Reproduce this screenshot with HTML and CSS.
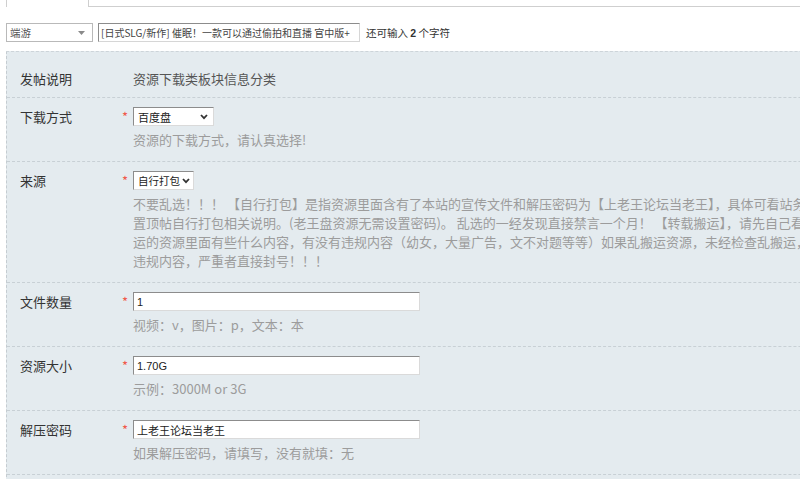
FILE: index.html
```html
<!DOCTYPE html>
<html lang="zh-CN">
<head>
  <meta charset="UTF-8">
  <title>发表帖子</title>
  <link rel="stylesheet" href="styles.css">
</head>
<body>
  <!-- tab strip, the active tab has no bottom border -->
  <div class="tabs">
    <div class="tab"></div>
    <div class="tab-line"></div>
  </div>

  <!-- type + subject -->
  <div class="subject-bar">
    <div class="type-select">
      <span>端游</span>
      <svg class="tri" width="7" height="4" viewBox="0 0 7 4"><path d="M0 0 L7 0 L3.5 4 Z" fill="#8a8a8a"/></svg>
    </div>
    <input class="subject-input" type="text" value="[日式SLG/新作] 催眠！一款可以通过偷拍和直播 官中版+">
    <span class="count-tip">还可输入 <strong>2</strong> 个字符</span>
  </div>

  <div class="panel">
    <div class="row row-intro">
      <div class="label">发帖说明</div>
      <div class="star"></div>
      <div class="field intro-text">资源下载类板块信息分类</div>
    </div>

    <div class="row">
      <div class="label">下载方式</div>
      <div class="star">*</div>
      <div class="field">
        <div class="fake-select select-down">
          <span>百度盘</span>
          <svg width="8" height="6" viewBox="0 0 8 6"><path d="M1 1 L4 4.2 L7 1" fill="none" stroke="#333" stroke-width="1.8"/></svg>
        </div>
        <div class="help">资源的下载方式，请认真选择!</div>
      </div>
    </div>

    <div class="row">
      <div class="label">来源</div>
      <div class="star">*</div>
      <div class="field">
        <div class="fake-select select-source">
          <span>自行打包</span>
          <svg width="8" height="6" viewBox="0 0 8 6"><path d="M1 1 L4 4.2 L7 1" fill="none" stroke="#333" stroke-width="1.8"/></svg>
        </div>
        <div class="help">不要乱选！！！ 【自行打包】是指资源里面含有了本站的宣传文件和解压密码为【上老王论坛当老王】，具体可看站务板块的<br>置顶帖自行打包相关说明。(老王盘资源无需设置密码)。 乱选的一经发现直接禁言一个月！ 【转载搬运】，请先自己看看搬<br>运的资源里面有些什么内容，有没有违规内容（幼女，大量广告，文不对题等等）如果乱搬运资源，未经检查乱搬运，查到<br>违规内容，严重者直接封号！！！</div>
      </div>
    </div>

    <div class="row">
      <div class="label">文件数量</div>
      <div class="star">*</div>
      <div class="field">
        <input class="text-input" type="text" value="1">
        <div class="help">视频：v，图片：p，文本：本</div>
      </div>
    </div>

    <div class="row">
      <div class="label">资源大小</div>
      <div class="star">*</div>
      <div class="field">
        <input class="text-input" type="text" value="1.70G">
        <div class="help">示例：3000M or 3G</div>
      </div>
    </div>

    <div class="row">
      <div class="label">解压密码</div>
      <div class="star">*</div>
      <div class="field">
        <input class="text-input" type="text" value="上老王论坛当老王">
        <div class="help">如果解压密码，请填写，没有就填：无</div>
      </div>
    </div>
  </div>
</body>
</html>
```

FILE: styles.css
```css
html, body {
  margin: 0;
  padding: 0;
  overflow: hidden;
  background: #fff;
}

body {
  font-family: "Noto Sans CJK SC", "Liberation Sans", sans-serif;
  font-size: 13px;
  color: #333;
}

/* tabs */
.tabs {
  display: flex;
  height: 7px;
  padding-left: 6px;
}

.tab {
  width: 81px;
  border-left: 1px solid #cfcfcf;
  border-right: 1px solid #cfcfcf;
}

.tab-line {
  flex: 1;
  border-bottom: 1px solid #cfcfcf;
}

/* subject row */
.subject-bar {
  display: flex;
  align-items: center;
  margin-top: 16px;
  padding-left: 6px;
  height: 19px;
}

.type-select {
  box-sizing: border-box;
  width: 87px;
  height: 19px;
  border: 1px solid #b9b9b9;
  background: #fff;
  display: flex;
  align-items: center;
  justify-content: space-between;
  padding: 0 7px 0 3px;
  font-size: 10.5px;
  color: #555;
}

.subject-input {
  box-sizing: border-box;
  width: 262px;
  height: 19px;
  margin: 0 0 0 5px;
  padding: 0 2px;
  border: 1px solid;
  border-color: #8c8c8c #d6d6d6 #d6d6d6 #8c8c8c;
  font-family: "Noto Sans CJK SC", "Liberation Sans", sans-serif;
  font-size: 10px;
  color: #444;
  outline: none;
}

.count-tip {
  margin-left: 6px;
  font-size: 10.5px;
  color: #333;
}

.count-tip strong {
  font-family: "Liberation Sans", sans-serif;
}

/* main panel */
.panel {
  margin: 9px 0 0 6px;
  width: 1100px;
  min-height: 440px;
  background: #e4ebef;
  border-top: 1px dashed #cdd4d9;
  border-left: 1px dashed #c5ccd1;
}

.row {
  display: grid;
  grid-template-columns: 100px 13px 1fr;
  padding: 9px 0 12px 13px;
  border-bottom: 1px dashed #c8d0d5;
}

.row-intro {
  padding: 17px 0 8px 13px;
  line-height: 20px;
}

.label {
  line-height: 19px;
  color: #333;
}

.row-intro .label {
  line-height: 20px;
}

.star {
  color: #f0594a;
  line-height: 19px;
  padding-left: 2px;
}

.intro-text {
  color: #555;
}

.field {
  display: flex;
  flex-direction: column;
  align-items: flex-start;
}

.fake-select {
  box-sizing: border-box;
  height: 19px;
  background: #fff;
  border: 1px solid;
  border-color: #8c8c8c #dadada #dadada #8c8c8c;
  display: flex;
  align-items: center;
  justify-content: space-between;
  padding: 0 5px 0 4px;
  font-size: 11px;
  color: #222;
  white-space: nowrap;
}

.select-down {
  width: 81px;
}

.select-source {
  width: 61px;
  padding-right: 3px;
  font-size: 10.5px;
}

.text-input {
  box-sizing: border-box;
  width: 287px;
  height: 19px;
  margin: 0;
  padding: 0 3px;
  border: 1px solid;
  border-color: #8c8c8c #dadada #dadada #8c8c8c;
  background: #fff;
  font-family: "Liberation Sans", "Noto Sans CJK SC", sans-serif;
  font-size: 11px;
  color: #222;
  outline: none;
}

.help {
  margin-top: 4px;
  line-height: 19px;
  color: #9c9c9c;
  white-space: nowrap;
}
```
